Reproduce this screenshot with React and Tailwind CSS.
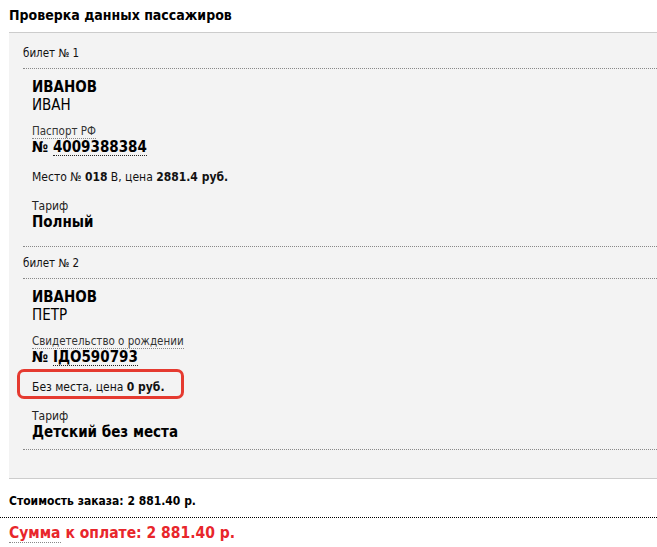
import React from 'react';

const tickets = [
  {
    title: 'билет № 1',
    lastName: 'ИВАНОВ',
    firstName: 'ИВАН',
    docLabel: 'Паспорт РФ',
    docNumber: '4009388384',
    seat: { place: '018', car: 'В', price: '2881.4' },
    tariff: 'Полный',
    tail: 'pb-[15px]',
  },
  {
    title: 'билет № 2',
    lastName: 'ИВАНОВ',
    firstName: 'ПЕТР',
    docLabel: 'Свидетельство о рождении',
    docNumber: 'IДO590793',
    seat: null,
    tariff: 'Детский без места',
    tail: 'pb-[8px]',
    highlight: true,
  },
];

function SeatLine({ seat }) {
  if (!seat) {
    return (
      <span>
        Без места, цена <b>0 руб.</b>
      </span>
    );
  }
  return (
    <span>
      Место № <b>{seat.place}</b> {seat.car}, цена <b>{seat.price} руб.</b>
    </span>
  );
}

function Ticket({ t, first }) {
  return (
    <div>
      <div
        className={`${first ? 'pt-[13px]' : 'pt-[9px]'} pb-[7px] text-[11.5px] leading-[15px] text-[#111] border-b border-dotted border-[#888]`}
      >
        {t.title}
      </div>
      <div className={`pl-[9px] ${t.tail} border-b border-dotted border-[#888]`}>
        <div className="pt-[9px] text-[15px] leading-[18px] font-bold text-black">{t.lastName}</div>
        <div className="text-[15px] leading-[18px] text-black">{t.firstName}</div>

        <div className="mt-[11px] text-[11.5px] leading-[13px] text-[#333]">
          <span className="border-b border-dotted border-[#888]">{t.docLabel}</span>
        </div>
        <div className="text-[15px] leading-[18px] font-bold text-black">
          №{' '}
          <span className="border-b border-dotted border-[#222] leading-[16px] inline-block">{t.docNumber}</span>
        </div>

        <div className="relative mt-[14px] text-[12px] leading-[14px] text-[#111]">
          {t.highlight && (
            <div className="absolute left-[-15px] top-[-11px] w-[167px] h-[30px] border-[3px] border-[#e53a30] rounded-[7px]" />
          )}
          <SeatLine seat={t.seat} />
        </div>

        <div className="mt-[15px] text-[12px] leading-[14px] text-[#222]">Тариф</div>
        <div className="text-[15px] leading-[18px] font-bold text-black">{t.tariff}</div>
      </div>
    </div>
  );
}

export default function App() {
  return (
    <div className="w-[657px] h-[547px] overflow-hidden bg-white font-['DejaVu_Sans',sans-serif] [font-stretch:condensed]">
      <h2 className="h-[32px] pl-[9px] pt-[7px] text-[14px] leading-[17px] font-bold text-black">
        Проверка данных пассажиров
      </h2>

      <div className="ml-[9px] bg-[#f3f3f3] border-y border-[#cccccc] pb-[28px]">
        <div className="ml-[14px]">
          {tickets.map((t, i) => (
            <Ticket key={i} t={t} first={i === 0} />
          ))}
        </div>
      </div>

      <div className="pl-[9px] pt-[15px] pb-[8px] text-[12px] leading-[15px] font-bold text-black border-b border-dotted border-black">
        Стоимость заказа: 2 881.40 р.
      </div>
      <div className="pl-[9px] pt-[5px] text-[15.5px] leading-[20px] font-bold text-[#e8262b]">
        <span className="border-b border-dotted border-[#888]">Сумма</span> к оплате: 2 881.40 р.
      </div>
    </div>
  );
}
